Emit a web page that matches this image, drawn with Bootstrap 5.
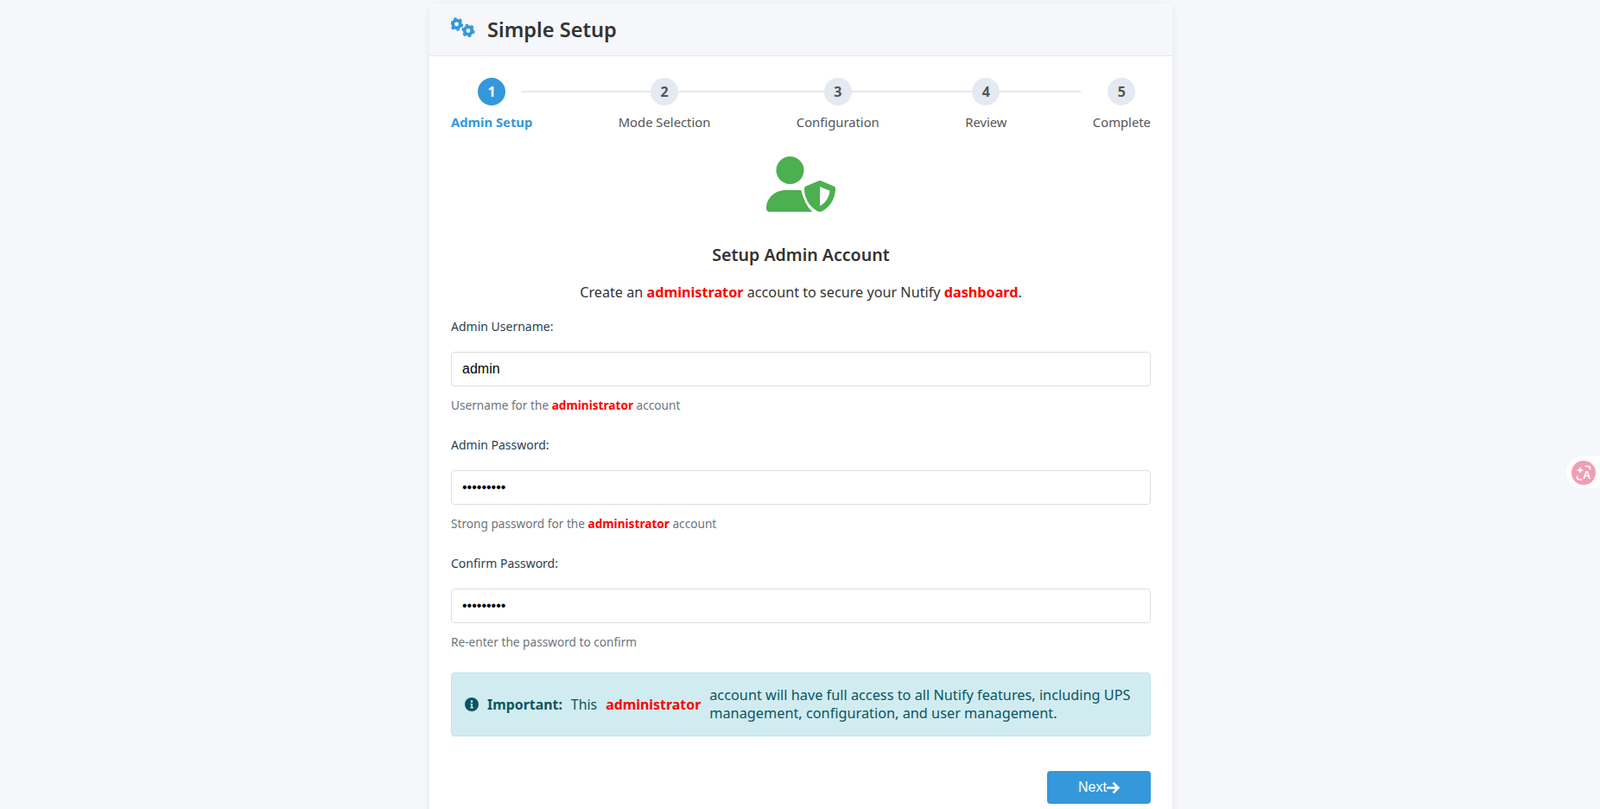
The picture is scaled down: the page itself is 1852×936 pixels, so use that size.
<!DOCTYPE html>
<html lang="en">
<head>
<meta charset="utf-8">
<title>Simple Setup</title>
<link href="https://cdn.jsdelivr.net/npm/bootstrap@5.3.0/dist/css/bootstrap.min.css" rel="stylesheet">
<style>
html,body{overflow:hidden;height:936px}
body{background:#f5f7fa;font-family:"Noto Sans","Open Sans",sans-serif;color:#333;padding:4px 0 0 2px}
.setup-card{width:860px;margin:0 auto;border:0;border-radius:8px;box-shadow:0 2px 10px rgba(0,0,0,.07);background:#fff}
.setup-head{height:61px;background:#f5f7fa;border-bottom:1px solid #e4e9f2;padding:0 25px;gap:14px;border-radius:8px 8px 0 0}
.setup-head h1{font-size:23.6px;font-weight:600;margin:0;color:#333}
.setup-gears{width:28px;height:28px;margin-top:-3px;flex:none}
.setup-main{padding:25px 25px 24px}
.stepper{position:relative;margin-bottom:30px}
.stepper-line{position:absolute;left:10%;right:10%;top:15px;height:2px;background:#e4e9f2}
.step-item{position:relative;display:flex;flex-direction:column;align-items:center;font-size:14.8px;color:#555;line-height:20px}
.step-dot{width:32px;height:32px;border-radius:50%;background:#e4e9f2;color:#555;font-weight:700;font-size:16px;display:flex;align-items:center;justify-content:center;margin-bottom:9px}
.step-item.on{color:#3498db;font-weight:700}
.step-item.on .step-dot{background:#3498db;color:#fff}
.hero-ico{display:block;width:80px;height:64px;margin:0 auto 37px auto}
.setup-title{font-size:19.6px;font-weight:600;text-align:center;margin:0 0 19px;line-height:26px;color:#333}
.setup-desc{text-align:center;font-size:16.2px;line-height:22px;margin:0 0 18px;color:#333}
.hot{color:#f00;font-weight:700}
.field-wrap{margin-bottom:25px}
.field-label{display:block;font-size:14px;line-height:22px;margin:0 0 18px;color:#2c3e50}
.field-input.form-control{height:40px;border:1px solid #ddd;border-radius:4px;font-family:"Liberation Sans",sans-serif;font-size:16px;color:#000;padding:0 12px}
.field-help{font-size:13.65px;line-height:20px;margin-top:12px;color:#6c757d}
.note-box.alert{display:flex;align-items:center;gap:10px;margin:1px 0 40px;padding:15px;height:74px;background:#d1ecf1;border:1px solid #bee5eb;border-radius:4px;color:#0c5460;font-size:15.9px;line-height:21px}
.note-box svg{width:16px;height:16px;flex:none}
.note-rest{font-size:16.3px}
.next-btn.btn{width:120px;height:38px;padding:0;background:#3498db;border:0;border-radius:4px;color:#fff;font-family:"Liberation Sans",sans-serif;font-size:16px;display:flex;align-items:center;justify-content:center}
.next-btn svg{width:15px;height:15px}
.lang-float{position:fixed;right:0;top:528px;width:39px;height:37px;background:#fff;border-radius:19px 0 0 19px;display:flex;align-items:center;padding-left:6px}
.lang-dot{position:relative;width:28px;height:28px;border-radius:50%;background:#f09db6;color:#fff}
.lang-dot svg{position:absolute;inset:0}
.lang-dot span{position:absolute;left:13px;top:10px;font:700 13px/14px "Liberation Sans",sans-serif}
</style>
</head>
<body>
<div class="card setup-card">
  <div class="setup-head d-flex align-items-center">
    <svg class="setup-gears" viewBox="0 0 28 28" fill="none" stroke="#3498db">
      <g>
        <circle cx="6.500" cy="9" r="4.300" stroke-width="3.800"/>
        <circle cx="6.500" cy="9" r="6.400" stroke-width="2.600" pathLength="12" stroke-dasharray="1 1"/>
      </g>
      <g>
        <circle cx="20" cy="16.500" r="4.300" stroke-width="3.800"/>
        <circle cx="20" cy="16.500" r="6.400" stroke-width="2.600" pathLength="12" stroke-dasharray="1 1"/>
      </g>
    </svg>
    <h1>Simple Setup</h1>
  </div>
  <div class="setup-main">
    <div class="stepper d-flex justify-content-between">
      <div class="stepper-line"></div>
      <div class="step-item on"><div class="step-dot">1</div>Admin Setup</div>
      <div class="step-item"><div class="step-dot">2</div>Mode Selection</div>
      <div class="step-item"><div class="step-dot">3</div>Configuration</div>
      <div class="step-item"><div class="step-dot">4</div>Review</div>
      <div class="step-item"><div class="step-dot">5</div>Complete</div>
    </div>
    <svg class="hero-ico" viewBox="0 0 640 512" fill="#4caf50">
      <circle cx="220" cy="128" r="128"/>
      <path d="M178 312H322C345 400 380 470 426 512H30C13 512 0 499 0 482C0 385 80 312 178 312Z"/>
      <path fill-rule="evenodd" d="M496 224c4 0 8 1 12 2l118 50c9 4 15 13 14 24c-1 62-27 154-120 205c-15 8-33 8-48 0C379 454 353 362 352 300c0-11 6-20 14-24l118-50c4-1 8-2 12-2ZM496 280V458c58-30 86-84 92-140Z"/>
    </svg>
    <h2 class="setup-title">Setup Admin Account</h2>
    <p class="setup-desc">Create an <span class="hot">administrator</span> account to secure your Nutify <span class="hot">dashboard</span>.</p>
    <div class="field-wrap">
      <label class="field-label" for="u1">Admin Username:</label>
      <input class="form-control field-input" id="u1" type="text" value="admin">
      <div class="field-help">Username for the <span class="hot">administrator</span> account</div>
    </div>
    <div class="field-wrap">
      <label class="field-label" for="p1">Admin Password:</label>
      <input class="form-control field-input" id="p1" type="password" value="123456789">
      <div class="field-help">Strong password for the <span class="hot">administrator</span> account</div>
    </div>
    <div class="field-wrap">
      <label class="field-label" for="p2">Confirm Password:</label>
      <input class="form-control field-input" id="p2" type="password" value="123456789">
      <div class="field-help">Re-enter the password to confirm</div>
    </div>
    <div class="alert note-box">
      <svg viewBox="0 0 16 16"><circle cx="8" cy="8" r="8" fill="#0c5460"/><circle cx="8" cy="4.600" r="1.300" fill="#d1ecf1"/><path d="M6.400 7h2.500v4.200h1v1.200H6.300v-1.200h1V8.200h-.9Z" fill="#d1ecf1"/></svg>
      <strong>Important:</strong>
      <span>This</span>
      <span class="hot">administrator</span>
      <span class="note-rest">account will have full access to all Nutify features, including UPS management, configuration, and user management.</span>
    </div>
    <div class="d-flex justify-content-end">
      <button class="btn next-btn" type="button">Next<svg viewBox="0 0 14 14" fill="none" stroke="#fff" stroke-width="2.400"><path d="M0 7H12.500M7 1.500L12.500 7L7 12.500"/></svg></button>
    </div>
  </div>
</div>
<div class="lang-float">
  <div class="lang-dot">
    <svg viewBox="0 0 28 28" fill="none" stroke="#fff" stroke-width="1.600"><path d="M10 6.500C10.600 9.500 11.500 10.400 14.500 11C11.500 11.600 10.600 12.500 10 15.500C9.400 12.500 8.500 11.600 5.500 11C8.500 10.400 9.400 9.500 10 6.500Z" fill="#fff" stroke="none"/><path d="M15.500 6.500H19.500Q21.500 6.500 21.500 9V10.500M6.500 17.500V19Q6.500 22 9.500 22H12.500"/></svg>
    <span>A</span>
  </div>
</div>
</body>
</html>
